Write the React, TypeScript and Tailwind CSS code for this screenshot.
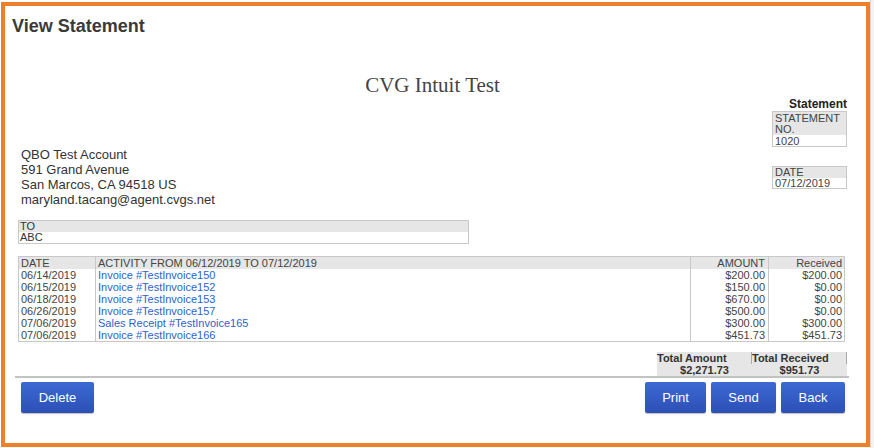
import React from 'react';

const rows = [
  { date: '06/14/2019', activity: 'Invoice #TestInvoice150', amount: '$200.00', received: '$200.00' },
  { date: '06/15/2019', activity: 'Invoice #TestInvoice152', amount: '$150.00', received: '$0.00' },
  { date: '06/18/2019', activity: 'Invoice #TestInvoice153', amount: '$670.00', received: '$0.00' },
  { date: '06/26/2019', activity: 'Invoice #TestInvoice157', amount: '$500.00', received: '$0.00' },
  { date: '07/06/2019', activity: 'Sales Receipt #TestInvoice165', amount: '$300.00', received: '$300.00' },
  { date: '07/06/2019', activity: 'Invoice #TestInvoice166', amount: '$451.73', received: '$451.73' },
];

function BlueButton({ label, width }: { label: string; width: string }) {
  return (
    <button
      className={`${width} h-[31px] rounded-[2px] bg-gradient-to-b from-[#3d69d3] to-[#2c50b6] text-[13px] text-white shadow-[0_1px_1px_rgba(0,0,0,0.25)]`}
    >
      {label}
    </button>
  );
}

export default function App() {
  return (
    <div className="flex w-[874px] h-[448px] bg-white font-['Liberation_Sans',Arial,sans-serif] text-[#333]">
      <div className="ml-[1px] mt-[2px] w-[869px] h-[445px] border-4 border-[#ee7f2d] bg-white">
        {/* Header */}
        <div className="pl-[7px] pt-[9px] text-[18px] leading-[22px] font-bold text-[#3a3a3a]">View Statement</div>

        <div className="pl-[13px] pr-[19px]">
          <div className="mt-[36px] text-center font-['Liberation_Serif','Times_New_Roman',serif] text-[21px] leading-[24px] text-[#444]">
            CVG Intuit Test
          </div>

          {/* Address + statement info */}
          <div className="flex justify-between">
            <div className="mt-[50px] pl-[3px] text-[13px] leading-[15px] text-[#333]">
              <div>QBO Test Account</div>
              <div>591 Grand Avenue</div>
              <div>San Marcos, CA 94518 US</div>
              <div>maryland.tacang@agent.cvgs.net</div>
            </div>
            <div className="w-[75px] flex flex-col">
              <div className="text-right text-[12px] leading-[14px] font-bold text-[#222]">Statement</div>
              <div className="border border-[#c8c8c8] text-[11px] text-[#444]">
                <div className="bg-[#e5e6e5] px-[2px] leading-[11px] pt-[1px]">STATEMENT NO.</div>
                <div className="px-[2px] leading-[10px] pt-[1px]">1020</div>
              </div>
              <div className="mt-[19px] border border-[#c8c8c8] text-[11px] text-[#444]">
                <div className="bg-[#e5e6e5] px-[2px] leading-[11px]">DATE</div>
                <div className="px-[2px] leading-[10px]">07/12/2019</div>
              </div>
            </div>
          </div>

          {/* To */}
          <div className="mt-[13px] w-[451px] border border-[#c8c8c8] text-[11px] text-[#333]">
            <div className="bg-[#e5e6e5] px-[1px] leading-[11px]">TO</div>
            <div className="px-[1px] leading-[11px]">ABC</div>
          </div>

          {/* Activity table */}
          <table className="mt-[12px] w-[826px] table-fixed border-collapse border border-[#c8c8c8] text-[11px] leading-[12px] text-[#444]">
            <colgroup>
              <col className="w-[77px]" />
              <col className="w-[595px]" />
              <col className="w-[78px]" />
              <col className="w-[76px]" />
            </colgroup>
            <thead>
              <tr className="bg-[#e5e6e5] font-normal">
                <th className="h-[12px] p-0 pl-[2px] text-left font-normal border-r border-[#c8c8c8]">DATE</th>
                <th className="p-0 pl-[2px] text-left font-normal border-r border-[#c8c8c8]">
                  ACTIVITY FROM 06/12/2019 TO 07/12/2019
                </th>
                <th className="p-0 pr-[3px] text-right font-normal border-r border-[#c8c8c8]">AMOUNT</th>
                <th className="p-0 pr-[2px] text-right font-normal">Received</th>
              </tr>
            </thead>
            <tbody>
              {rows.map((r, i) => (
                <tr key={i}>
                  <td className="h-[12px] p-0 pl-[2px] border-r border-[#c8c8c8]">{r.date}</td>
                  <td className="p-0 pl-[2px] border-r border-[#c8c8c8]">
                    <a className="text-[#2d62cc]">{r.activity}</a>
                  </td>
                  <td className="p-0 pr-[3px] text-right border-r border-[#c8c8c8]">{r.amount}</td>
                  <td className="p-0 pr-[2px] text-right">{r.received}</td>
                </tr>
              ))}
            </tbody>
          </table>

          {/* Totals */}
          <div className="mt-[10px] flex justify-end">
            <div className="w-[190px] bg-[#e5e6e5] text-[11px] font-bold text-[#333] grid grid-cols-2">
              <div className="leading-[12px] border-r border-[#a9a9a9]">Total Amount</div>
              <div className="leading-[12px] border-r border-[#a9a9a9]">Total Received</div>
              <div className="leading-[12px] text-center">$2,271.73</div>
              <div className="leading-[12px] text-center">$951.73</div>
            </div>
          </div>

          <div className="-ml-[3px] w-[834px] h-[2px] bg-[#c2c2c2]" />

          {/* Buttons */}
          <div className="mt-[4px] flex items-center pl-[3px] pr-[2px]">
            <BlueButton label="Delete" width="w-[73px]" />
            <div className="flex-1" />
            <div className="flex gap-[5px]">
              <BlueButton label="Print" width="w-[61px]" />
              <BlueButton label="Send" width="w-[65px]" />
              <BlueButton label="Back" width="w-[64px]" />
            </div>
          </div>
        </div>
      </div>
      <div className="mt-0 w-[4px] h-[448px] bg-[#f3f3f3] border-l border-[#d6d6d6]" />
    </div>
  );
}
